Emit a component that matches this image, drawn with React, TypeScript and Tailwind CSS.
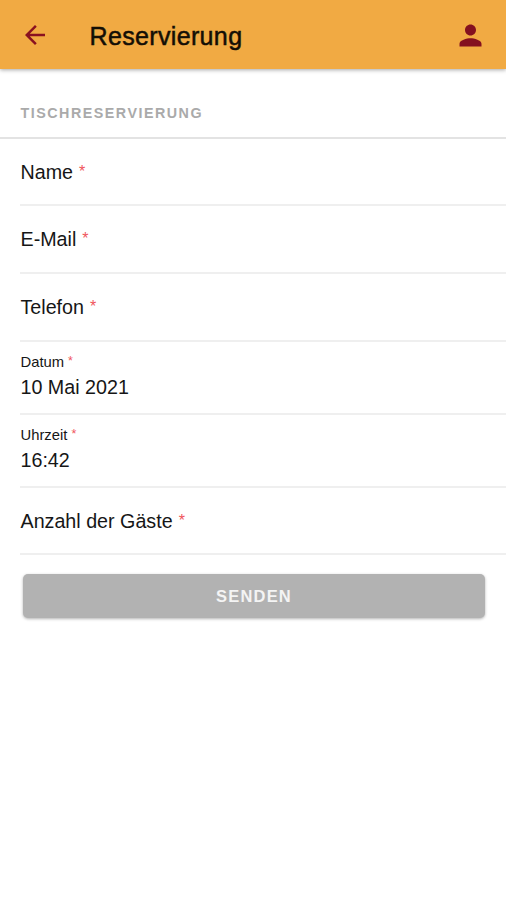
import { MdArrowBack, MdPerson } from "react-icons/md";

interface Field {
    label: string;
    value?: string;
    height: string;
}

const fields: Field[] = [
    { label: "Name", height: "h-[67px]" },
    { label: "E-Mail", height: "h-[68px]" },
    { label: "Telefon", height: "h-[68px]" },
    { label: "Datum", value: "10 Mai 2021", height: "h-[73px]" },
    { label: "Uhrzeit", value: "16:42", height: "h-[73px]" },
    { label: "Anzahl der Gäste", height: "h-[67px]" },
];

function FormRow({ label, value, height }: Field) {
    if (value) {
        return (
            <div className={`flex flex-col border-b-2 border-[#efefef] pt-[11px] pl-[0.5px] ${height}`}>
                <div className="flex text-[14.8px] leading-[18px]">
                    {label}
                    <span className="ml-1 text-[12.5px] leading-[17px] text-[#f0555b]">*</span>
                </div>
                <div className="mt-[5px] text-[19.7px] leading-[22px]">{value}</div>
            </div>
        );
    }

    return (
        <div className={`flex items-center border-b-2 border-[#efefef] pl-[0.5px] text-[19.7px] leading-[22px] ${height}`}>
            {label}
            <span className="ml-1.5 text-[16px] leading-[20px] text-[#f0555b]">*</span>
        </div>
    );
}

export default function App() {
    return (
        <div className="flex h-[900px] w-full flex-col overflow-hidden bg-white font-['Liberation_Sans',Arial,sans-serif] text-[#161616]">

            {/* Toolbar */}
            <header className="flex h-[69px] shrink-0 items-center bg-[#f1aa43] pt-px pr-[19.5px] pl-[20px] shadow-[0_1px_4px_rgba(0,0,0,0.35)]">
                <button aria-label="Zurück" className="text-[#8a1120]">
                    <MdArrowBack size={30} />
                </button>
                <h1 className="ml-[39.5px] flex-1 pt-0.5 text-[25px] leading-[30px] tracking-[0.35px] text-[#140e05] [-webkit-text-stroke:0.5px_#140e05]">
                    Reservierung
                </h1>
                <button aria-label="Profil" className="text-[#84101f]">
                    <MdPerson size={33} />
                </button>
            </header>

            <main>
                <h2 className="flex h-[70px] items-end border-b-2 border-[#e3e3e3] pb-[15px] pl-[20.5px] text-[14.3px] leading-[18px] font-bold tracking-[1.5px] text-[#aaaaaa]">
                    TISCHRESERVIERUNG
                </h2>

                <form className="pl-5">
                    {fields.map((field) => (
                        <FormRow key={field.label} {...field} />
                    ))}
                </form>

                <div className="pt-[19px] pr-[21px] pl-[23px]">
                    <button className="flex h-[44px] w-full items-center justify-center rounded-[5px] bg-[#b2b2b2] text-[16.5px] font-bold tracking-[1.2px] text-[#f4f4f4] shadow-[0_1px_3px_rgba(0,0,0,0.3)]">
                        SENDEN
                    </button>
                </div>
            </main>
        </div>
    );
}
